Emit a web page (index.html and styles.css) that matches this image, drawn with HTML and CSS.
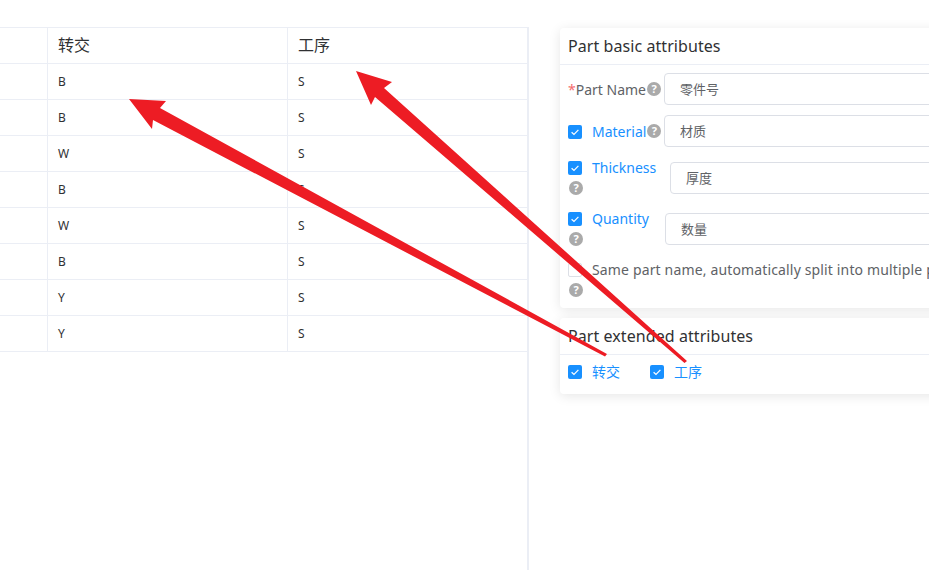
FILE: index.html
```html
<!DOCTYPE html>
<html lang="zh-CN">
<head>
<meta charset="utf-8">
<title>Part attributes</title>
<link rel="stylesheet" href="styles.css">
</head>
<body>
<div class="page">
  <section class="left">
    <div class="table">
      <div class="row head"><div class="cell"></div><div class="cell">转交</div><div class="cell">工序</div></div>
      <div class="row"><div class="cell"></div><div class="cell">B</div><div class="cell">S</div></div>
      <div class="row"><div class="cell"></div><div class="cell">B</div><div class="cell">S</div></div>
      <div class="row"><div class="cell"></div><div class="cell">W</div><div class="cell">S</div></div>
      <div class="row"><div class="cell"></div><div class="cell">B</div><div class="cell">S</div></div>
      <div class="row"><div class="cell"></div><div class="cell">W</div><div class="cell">S</div></div>
      <div class="row"><div class="cell"></div><div class="cell">B</div><div class="cell">S</div></div>
      <div class="row"><div class="cell"></div><div class="cell">Y</div><div class="cell">S</div></div>
      <div class="row"><div class="cell"></div><div class="cell">Y</div><div class="cell">S</div></div>
    </div>
  </section>
  <section class="right">
    <div class="card">
      <div class="card-head">Part basic attributes</div>
      <div class="card-body">
        <div class="field">
          <div class="label fixed"><span class="req">*</span><span class="plain">Part Name</span><span class="help">?</span></div>
          <div class="input">零件号</div>
        </div>
        <div class="field">
          <div class="label fixed"><span class="check on"><svg viewBox="0 0 14 14"><path d="M3.6 7.2 6 9.5 10.4 4.8"/></svg></span><span class="blue">Material</span><span class="help">?</span></div>
          <div class="input">材质</div>
        </div>
        <div class="field">
          <div class="label two thick"><span class="line"><span class="check on"><svg viewBox="0 0 14 14"><path d="M3.6 7.2 6 9.5 10.4 4.8"/></svg></span><span class="blue">Thickness</span></span><span class="line"><span class="help">?</span></span></div>
          <div class="input">厚度</div>
        </div>
        <div class="field">
          <div class="label two qty"><span class="line"><span class="check on"><svg viewBox="0 0 14 14"><path d="M3.6 7.2 6 9.5 10.4 4.8"/></svg></span><span class="blue">Quantity</span></span><span class="line"><span class="help">?</span></span></div>
          <div class="input">数量</div>
        </div>
        <div class="field">
          <div class="label two wide"><span class="line"><span class="check"></span><span class="plain long">Same part name, automatically split into multiple parts</span></span><span class="line"><span class="help">?</span></span></div>
        </div>
      </div>
    </div>
    <div class="card">
      <div class="card-head">Part extended attributes</div>
      <div class="card-body ext">
        <div class="opt"><span class="check on"><svg viewBox="0 0 14 14"><path d="M3.6 7.2 6 9.5 10.4 4.8"/></svg></span><span class="blue">转交</span></div>
        <div class="opt"><span class="check on"><svg viewBox="0 0 14 14"><path d="M3.6 7.2 6 9.5 10.4 4.8"/></svg></span><span class="blue">工序</span></div>
      </div>
    </div>
  </section>
  <svg class="arrows" viewBox="0 0 929 570" width="929" height="570">
    <polygon points="129,99 166,101 160,108 607,354 605,356.5 153,120 152,129"/>
    <polygon points="356,71 392,82 384,88 687,361 684.5,363 375,97 371,105"/>
  </svg>
</div>
</body>
</html>
```
FILE: styles.css
```css
* { box-sizing: border-box; }
html, body { margin: 0; padding: 0; background: #fff; }
body {
  font-family: "Noto Sans", "Noto Sans CJK SC", sans-serif;
  color: #303133;
}
.page {
  position: relative;
  display: flex;
  width: 929px;
  height: 570px;
  overflow: hidden;
}
.left {
  flex: none;
  width: 529px;
  padding-top: 27px;
}
.table {
  height: 100%;
  border-top: 1px solid #ebeef5;
  border-right: 2px solid #ebeef5;
}
.row {
  display: grid;
  grid-template-columns: 48px 240px 239px;
  height: 36px;
  border-bottom: 1px solid #ebeef5;
}
.cell {
  display: flex;
  align-items: center;
  padding-left: 10px;
  font-size: 12px;
  border-right: 1px solid #ebeef5;
}
.cell:first-child { padding: 0; }
.cell:last-child { border-right: 0; }
.head .cell { padding-bottom: 3px; font-size: 16px; }
.right {
  flex: none;
  width: 500px;
  padding: 28px 0 0 31px;
}
.card {
  width: 500px;
  margin-bottom: 10px;
  background: #fff;
  border-radius: 4px;
  box-shadow: 0 2px 12px 0 rgba(0, 0, 0, .1);
}
.card-head {
  height: 37px;
  padding-left: 8px;
  font-size: 16px;
  letter-spacing: .07px;
  line-height: 36px;
  border-bottom: 1px solid #ebeef5;
}
.card-body { padding: 8px; }
.field {
  display: flex;
  align-items: center;
  margin-bottom: 10px;
}
.field:last-child { margin-bottom: 0; }
.label {
  flex: none;
  display: flex;
  align-items: center;
  font-size: 14px;
  color: #606266;
}
.fixed { width: 96px; height: 32px; }
.two {
  display: grid;
  grid-auto-rows: 20.5px;
  align-items: center;
}
.thick { width: 102px; }
.qty { width: 97px; }
.wide { width: 480px; }
.line {
  display: flex;
  align-items: center;
  white-space: nowrap;
}
.req { color: #f56c6c; }
.plain { color: #606266; }
.long { letter-spacing: .15px; }
.blue { color: #1890ff; }
.help {
  display: inline-block;
  flex: none;
  width: 14px;
  height: 14px;
  margin-left: 1px;
  border-radius: 50%;
  background: #aaa;
  color: #fff;
  font-size: 11px;
  font-weight: 700;
  line-height: 14px;
  text-align: center;
}
.check {
  display: inline-block;
  flex: none;
  width: 14px;
  height: 14px;
  margin: 2px 10px 0 0;
  border: 1px solid #dcdfe6;
  border-radius: 2px;
  background: #fff;
}
.check.on { border: 0; background: #1890ff; }
.check svg { display: block; width: 14px; height: 14px; }
.check path { fill: none; stroke: #fff; stroke-width: 1.2; }
.input {
  flex: none;
  width: 400px;
  height: 32px;
  padding-left: 15px;
  border: 1px solid #dcdfe6;
  border-radius: 4px;
  font-size: 13px;
  line-height: 30px;
  color: #606266;
}
.ext {
  display: flex;
  gap: 30px;
  height: 39px;
  padding: 0 8px 5px;
  align-items: center;
}
.opt {
  display: flex;
  align-items: center;
  font-size: 14px;
}
.opt .check { margin-top: 0; }
.opt .blue { padding-bottom: 2px; }
.arrows {
  position: absolute;
  left: 0;
  top: 0;
  pointer-events: none;
}
.arrows polygon { fill: #ed1c24; }
```
